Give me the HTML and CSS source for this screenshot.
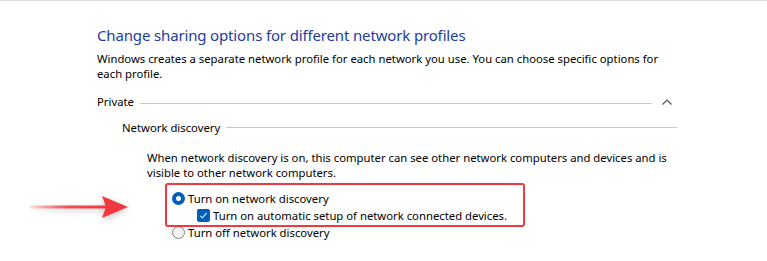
FILE: index.html
```html
<!DOCTYPE html>
<html lang="en">
<head>
    <meta charset="UTF-8">
    <title>Advanced sharing settings</title>
    <link rel="stylesheet" href="styles.css">
</head>
<body>

    <div class="page">
        <h1 class="title">Change sharing options for different network profiles</h1>
        <p class="intro">Windows creates a separate network profile for each network you use. You can choose specific options for each profile.</p>

        <!-- Private profile -->
        <div class="group-head">
            <span class="group-name">Private</span>
            <span class="rule"></span>
            <svg class="chevron" width="12" height="8" viewBox="0 0 12 8">
                <polyline points="1.5,6.5 6,2 10.5,6.5" fill="none" stroke="#555" stroke-width="1.2"/>
            </svg>
        </div>

        <div class="section-head">
            <span class="section-name">Network discovery</span>
            <span class="rule"></span>
        </div>

        <div class="section-body">
            <p class="desc">When network discovery is on, this computer can see other network computers and devices and is visible to other network computers.</p>

            <div class="options">
                <div class="highlight"></div>
                <label class="option">
                    <span class="radio checked"></span>
                    Turn on network discovery
                </label>
                <label class="option sub">
                    <span class="checkbox">
                        <svg width="9" height="9" viewBox="0 0 9 9">
                            <polyline points="1.5,4.8 3.5,6.8 7.5,2.2" fill="none" stroke="#fff" stroke-width="1.1"/>
                        </svg>
                    </span>
                    Turn on automatic setup of network connected devices.
                </label>
                <label class="option">
                    <span class="radio"></span>
                    Turn off network discovery
                </label>
            </div>
        </div>
    </div>

    <!-- annotation arrow -->
    <svg class="arrow" width="110" height="34" viewBox="0 0 110 34">
        <defs>
            <linearGradient id="shaft" x1="0" x2="1" y1="0" y2="0">
                <stop offset="0" stop-color="#f0393f" stop-opacity="0.15"/>
                <stop offset="0.5" stop-color="#f0393f" stop-opacity="0.9"/>
                <stop offset="1" stop-color="#f0393f"/>
            </linearGradient>
        </defs>
        <rect x="4" y="15.5" width="76" height="3" fill="url(#shaft)"/>
        <polygon points="76,6 102,17 76,28 80,17" fill="#f0393f"/>
    </svg>

</body>
</html>
```

FILE: styles.css
```css
body {
    margin: 0;
    border-top: 1px solid #d9d9d9;
    background-color: #fff;
    color: #000;
    font-family: "Noto Sans", "Open Sans", sans-serif;
    font-size: 11.3px;
}

.page {
    padding: 23px 0 0 97px;
    width: 580px;
}

.title {
    margin: 0;
    font-size: 15px;
    font-weight: normal;
    letter-spacing: -0.15px;
    line-height: 22px;
    color: #1e3c9c;
}

.intro {
    margin: 5px 0 0;
    line-height: 15px;
}

.group-head, .section-head {
    display: flex;
    align-items: center;
    line-height: 16px;
}

.group-head {
    margin-top: 13px;
}

.section-head {
    margin: 10px 0 0 25px;
}

.rule {
    flex: 1;
    height: 1px;
    margin-left: 6px;
    background-color: #c8c8c8;
}

.group-head .rule {
    margin-top: 3px;
}

.section-head .rule {
    margin-top: -1px;
}

.chevron {
    margin: 0 4px 0 9px;
}

.section-body {
    padding-left: 50px;
}

.desc {
    margin: 14px 0 0;
    line-height: 15px;
}

.options {
    position: relative;
    margin-top: 10px;
    padding-left: 25px;
}

.option {
    display: flex;
    align-items: center;
    line-height: 17px;
    height: 17px;
}

.option.sub {
    padding-left: 25px;
}

.radio {
    box-sizing: border-box;
    width: 13px;
    height: 13px;
    margin-right: 3px;
    border: 1px solid #858585;
    border-radius: 50%;
    background-color: #f3f3f3;
}

.radio.checked {
    border: 4px solid #005fb8;
    background-color: #fff;
}

.checkbox {
    display: flex;
    align-items: center;
    justify-content: center;
    width: 13px;
    height: 13px;
    margin-right: 3px;
    border-radius: 2px;
    background-color: #005fb8;
}

.highlight {
    position: absolute;
    left: 18px;
    top: -7px;
    box-sizing: border-box;
    width: 360px;
    height: 44px;
    border: 2.5px solid #ee3a40;
    border-radius: 3px;
}

.arrow {
    position: absolute;
    left: 26px;
    top: 190px;
    filter: drop-shadow(0 2px 3px rgba(0, 0, 0, 0.25));
}
```
